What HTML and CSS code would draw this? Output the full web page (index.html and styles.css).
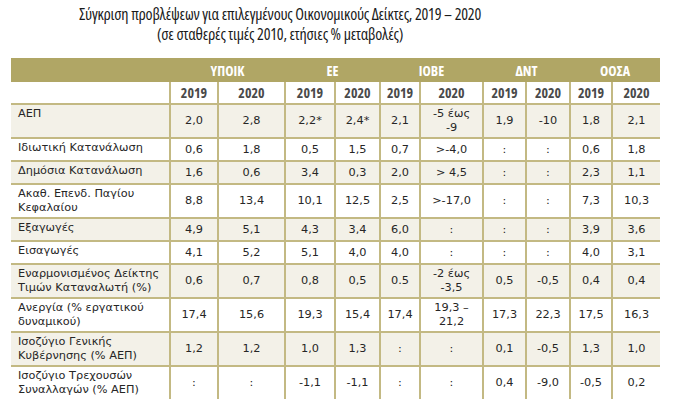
FILE: index.html
```html
<!DOCTYPE html>
<html lang="el">
<head>
<meta charset="utf-8">
<title>Σύγκριση προβλέψεων</title>
<link rel="stylesheet" href="styles.css">
</head>
<body>
<div class="title">
  <div>Σύγκριση προβλέψεων για επιλεγμένους Οικονομικούς Δείκτες, 2019 – 2020</div>
  <div>(σε σταθερές τιμές 2010, ετήσιες % μεταβολές)</div>
</div>
<table class="grid">
  <colgroup>
    <col class="c-label">
    <col class="c1"><col class="c2"><col class="c3"><col class="c4"><col class="c5">
    <col class="c6"><col class="c7"><col class="c8"><col class="c9"><col class="c10">
  </colgroup>
  <thead>
    <tr class="groups">
      <th></th>
      <th colspan="2">ΥΠΟΙΚ</th>
      <th colspan="2">ΕΕ</th>
      <th colspan="2">ΙΟΒΕ</th>
      <th colspan="2">ΔΝΤ</th>
      <th colspan="2">ΟΟΣΑ</th>
    </tr>
    <tr class="years">
      <th class="blank"></th>
      <th>2019</th><th>2020</th><th>2019</th><th>2020</th><th>2019</th>
      <th>2020</th><th>2019</th><th>2020</th><th>2019</th><th>2020</th>
    </tr>
  </thead>
  <tbody>
    <tr class="shade two">
      <td class="lbl">ΑΕΠ</td>
      <td>2,0</td><td>2,8</td><td>2,2*</td><td>2,4*</td><td>2,1</td>
      <td>-5 έως<br>-9</td><td>1,9</td><td>-10</td><td>1,8</td><td>2,1</td>
    </tr>
    <tr class="one">
      <td class="lbl">Ιδιωτική Κατανάλωση</td>
      <td>0,6</td><td>1,8</td><td>0,5</td><td>1,5</td><td>0,7</td>
      <td>&gt;-4,0</td><td>:</td><td>:</td><td>0,6</td><td>1,8</td>
    </tr>
    <tr class="shade one">
      <td class="lbl">Δημόσια Κατανάλωση</td>
      <td>1,6</td><td>0,6</td><td>3,4</td><td>0,3</td><td>2,0</td>
      <td>&gt; 4,5</td><td>:</td><td>:</td><td>2,3</td><td>1,1</td>
    </tr>
    <tr class="two">
      <td class="lbl">Ακαθ. Επενδ. Παγίου Κεφαλαίου</td>
      <td>8,8</td><td>13,4</td><td>10,1</td><td>12,5</td><td>2,5</td>
      <td>&gt;-17,0</td><td>:</td><td>:</td><td>7,3</td><td>10,3</td>
    </tr>
    <tr class="shade one">
      <td class="lbl">Εξαγωγές</td>
      <td>4,9</td><td>5,1</td><td>4,3</td><td>3,4</td><td>6,0</td>
      <td>:</td><td>:</td><td>:</td><td>3,9</td><td>3,6</td>
    </tr>
    <tr class="one">
      <td class="lbl">Εισαγωγές</td>
      <td>4,1</td><td>5,2</td><td>5,1</td><td>4,0</td><td>4,0</td>
      <td>:</td><td>:</td><td>:</td><td>4,0</td><td>3,1</td>
    </tr>
    <tr class="shade two">
      <td class="lbl">Εναρμονισμένος Δείκτης Τιμών Καταναλωτή (%)</td>
      <td>0,6</td><td>0,7</td><td>0,8</td><td>0,5</td><td>0.5</td>
      <td>-2 έως<br>-3,5</td><td>0,5</td><td>-0,5</td><td>0,4</td><td>0,4</td>
    </tr>
    <tr class="two">
      <td class="lbl">Ανεργία (% εργατικού δυναμικού)</td>
      <td>17,4</td><td>15,6</td><td>19,3</td><td>15,4</td><td>17,4</td>
      <td>19,3 –<br>21,2</td><td>17,3</td><td>22,3</td><td>17,5</td><td>16,3</td>
    </tr>
    <tr class="shade two">
      <td class="lbl">Ισοζύγιο Γενικής Κυβέρνησης (% ΑΕΠ)</td>
      <td>1,2</td><td>1,2</td><td>1,0</td><td>1,3</td><td>:</td>
      <td>:</td><td>0,1</td><td>-0,5</td><td>1,3</td><td>1,0</td>
    </tr>
    <tr class="two last">
      <td class="lbl">Ισοζύγιο Τρεχουσών Συναλλαγών (% ΑΕΠ)</td>
      <td>:</td><td>:</td><td>-1,1</td><td>-1,1</td><td>:</td>
      <td>:</td><td>0,4</td><td>-9,0</td><td>-0,5</td><td>0,2</td>
    </tr>
  </tbody>
</table>
</body>
</html>
```
FILE: styles.css
```css
html, body {
  margin: 0;
  padding: 0;
  background: #ffffff;
}
body {
  padding: 4px 0 0 11px;
}
.title {
  width: 538px;
  text-align: center;
  font-family: "Open Sans", Roboto, sans-serif;
  font-stretch: 75%;
  font-size: 16px;
  letter-spacing: -0.2px;
  line-height: 20px;
  color: #1a1a1a;
  white-space: nowrap;
}
.grid {
  margin-top: 14px;
  border-collapse: collapse;
  table-layout: fixed;
  width: 649px;
  font-family: "DejaVu Sans", Verdana, sans-serif;
  font-size: 11.3px;
  color: #262626;
}
.c-label { width: 159px; }
.c1 { width: 48px; }
.c2 { width: 67px; }
.c3 { width: 50px; }
.c4 { width: 45px; }
.c5 { width: 40px; }
.c6 { width: 63px; }
.c7 { width: 43px; }
.c8 { width: 44px; }
.c9 { width: 42px; }
.c10 { width: 48px; }

.groups th {
  background: #b0a665;
  color: #ffffff;
  font-family: "Open Sans", Roboto, sans-serif;
  font-stretch: 75%;
  font-weight: bold;
  font-size: 14px;
  height: 24px;
  padding: 0;
  text-align: center;
}
.years th {
  height: 21px;
  padding: 0;
  font-family: "Open Sans", Roboto, sans-serif;
  font-stretch: 75%;
  font-weight: bold;
  font-size: 14px;
  color: #4a4a4a;
  border-left: 2px solid #c3b983;
  border-right: 2px solid #c3b983;
  text-align: center;
}
.years th.blank {
  border-left: none;
}
.years th:last-child {
  border-right: none;
}
tbody td {
  border: 2px solid #c3b983;
  text-align: center;
  vertical-align: middle;
  padding: 2px 2px;
  line-height: 14px;
}
tbody td:first-child {
  border-left: none;
}
tbody td:last-child {
  border-right: none;
}
tbody tr:first-child td {
  border-top: 2px solid #c3b983;
}
tbody tr.last td {
  border-bottom: none;
}
tbody td.lbl {
  text-align: left;
  vertical-align: top;
  padding: 2px 4px 2px 7px;
}
tr.one td { height: 17px; }
tr.two td { height: 25px; }
tr.shade td { background: #f3f1e8; }
```
